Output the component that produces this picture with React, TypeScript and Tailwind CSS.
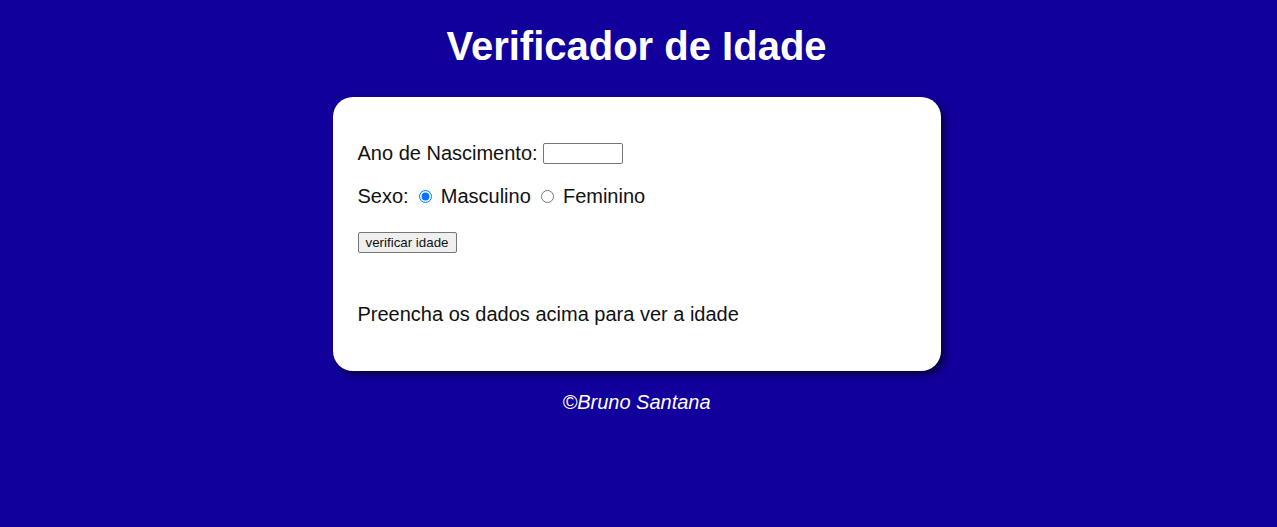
export default function App() {
  return (
    <div className="min-h-[527px] bg-[#11009b] pr-[4px] font-['Liberation_Sans',Arial,sans-serif] text-[#111]">
      <h1 className="pt-[23px] text-center text-[40px] font-bold leading-[46px] text-white">
        Verificador de Idade
      </h1>
      <main className="mx-auto mt-[28px] flex w-[608px] flex-col rounded-[20px] bg-white px-[25px] pt-[44px] pb-[45px] text-[20px] shadow-[4px_4px_6px_rgba(0,0,0,0.55)]">
        <div className="flex h-[24px] items-center">
          <label htmlFor="txtano">Ano de Nascimento:</label>
          <input
            id="txtano"
            type="text"
            className="ml-[5px] h-[21px] w-[80px] rounded-[2px] border border-[#767676] bg-white px-[2px] text-[13.33px]"
          />
        </div>
        <div className="mt-[19px] flex h-[24px] items-center">
          <span>Sexo:&nbsp;</span>
          <input
            type="radio"
            name="sexo"
            id="mas"
            defaultChecked
            className="mr-[3px] ml-[5px] h-[13px] w-[13px] accent-[#0075ff]"
          />
          <label htmlFor="mas">&nbsp;Masculino&nbsp;</label>
          <input
            type="radio"
            name="sexo"
            id="fem"
            className="mr-[3px] ml-[5px] h-[13px] w-[13px]"
          />
          <label htmlFor="fem">&nbsp;Feminino</label>
        </div>
        <div className="mt-[24px] flex">
          <button
            type="button"
            className="h-[21px] w-[99px] rounded-[2px] border border-[#767676] bg-[#efefef] text-[13.33px] leading-none"
          >
            verificar idade
          </button>
        </div>
        <div className="mt-[49px] flex h-[24px] items-center">
          Preencha os dados acima para ver a idade
        </div>
      </main>
      <footer className="mt-[19px] text-center text-[20px] leading-[24px] text-white italic">
        &copy;Bruno Santana
      </footer>
    </div>
  );
}
